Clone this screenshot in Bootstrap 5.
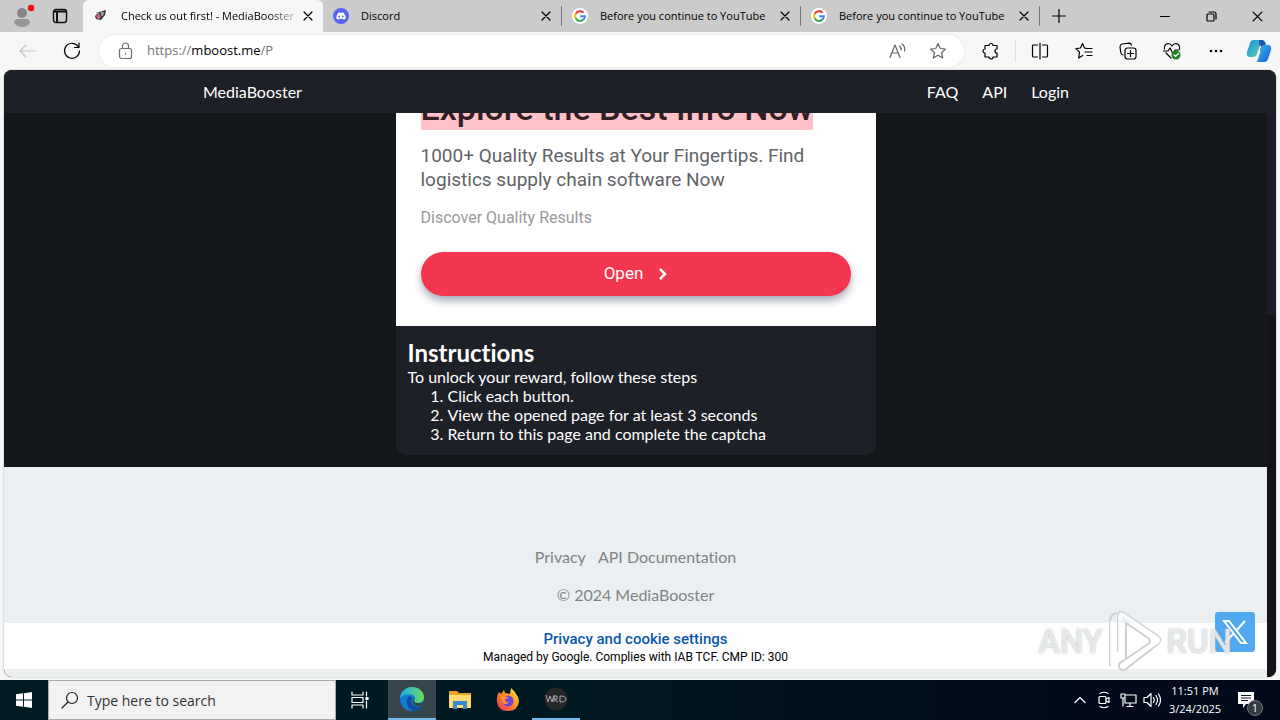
<!DOCTYPE html>
<html lang="en">
<head>
<meta charset="utf-8">
<meta name="viewport" content="width=device-width, initial-scale=1">
<title>Check us out first! - MediaBooster</title>
<link href="https://cdn.jsdelivr.net/npm/bootstrap@5.3.0/dist/css/bootstrap.min.css" rel="stylesheet">
<style>
body{font-family:"Open Sans","Noto Sans",sans-serif;background:#f7f7f7;color:#000}
button,a.plain{border:0;background:none;padding:0;color:inherit;text-decoration:none}
svg{display:block;flex:none}
.line{fill:none;stroke:currentColor;stroke-width:1.2;stroke-linecap:round;stroke-linejoin:round}
.tabstrip{background:#cbcbcb;height:32px}
.tabtools{width:83px}
.browsertab{flex:0 1 239px;min-width:0;font-size:11px;height:32px;padding:0 6px 0 10px;position:relative}
.browsertab.current{background:#f7f7f7;border-radius:6px 6px 0 0;flex-basis:240px;padding-left:10px;padding-right:10px}
.browsertab.sep{border-right:1px solid #777;height:20px}
.tabname{overflow:hidden;white-space:nowrap;flex:1}
.current .tabname{-webkit-mask-image:linear-gradient(90deg,#000 85%,#0003)}
.winbtn{width:46px;height:32px}
.tools{height:38px;padding-left:6px}
.tool{width:44px;height:32px}
.tool.end{width:42px}
.toolrule{margin:8px 2px;color:#999}
.address{background:#fff;border-radius:16px;height:32px;box-shadow:0 0 2px #ddd;margin:0 5px;padding:0 16px}
.urltext{font-size:13px;color:#767676;white-space:nowrap;outline:0}
.urltext b{font-weight:400;color:#000}
.viewport{background:#13171a;border-radius:8px;margin:0 4px 3px;font-family:Lato,sans-serif;font-size:16px;font-variant-ligatures:none;box-shadow:0 0 2px #aaa}
.sitebar{background:#1e2028;color:#fff;height:43px;padding-right:8px}
.sitebar .inner{width:866px;max-width:100%}
.scroller{width:9px;background:#13141a}
.scroller div{height:202px;background:#1e1c28}
.stage{background:#13171a;padding-bottom:12px;min-height:0}
.panel{width:480px;max-width:100%;background:#1e2028;color:#fff;border-radius:0 0 12px 12px}
.promo{background:#fff;padding:0 25px 30px;font-family:Roboto,sans-serif;color:#5f6368}
.promo h2{font-size:34px;line-height:44px;font-weight:500;color:#351d24;white-space:nowrap;margin-bottom:14px}
.promo h2 span{background:#ffc1c9;display:inline-block}
.promo .copy{font-size:19px;line-height:24px;margin-bottom:14px}
.promo .fine{font-size:16px;line-height:24px;color:#999;margin-bottom:22px}
.openbtn{height:44px;border-radius:22px;background:#f4364f;color:#fff;font-size:17px;box-shadow:0 5px 9px #a9adb9}
.steps{padding:13px 12px 12px;line-height:19px}
.steps h1{font-size:24px;line-height:28px;font-weight:700}
.steps ol{padding-left:40px}
.sitefoot{background:#ebeff1;color:#808384;height:156px;padding-top:77px;line-height:26px}
.footlinks{margin-bottom:12px}
.consent{background:#fff;height:46px;font-family:Roboto,sans-serif;font-size:12px;line-height:18px;padding-top:7px}
.consent button{font-size:15px;font-weight:500;color:#0b57b0;line-height:18px}
.footedge{background:#ebefef;height:8px}
.taskbar{background:linear-gradient(90deg,#001a22,#001821 45%,#020a1b 85%);height:40px;color:#fff}
.taskbtn{width:48px;height:40px}
.taskbtn.active{background:#35474d}
.taskbtn.open{border-bottom:2px solid #76b9ed}
.search{width:288px;height:40px;background:#f2f2f2;border:1px solid #aaa}
.search input{border:0;background:none;outline:0;font-size:14px;width:100%;padding:0}
.search input::placeholder{color:#333;opacity:1}
.clock{font-size:11px;line-height:18px;width:62px;white-space:nowrap}
.notify{margin:0 26px 0 12px}
.trayicon{width:24px;height:40px}
.watermark{position:absolute;right:48px;bottom:46px;height:66px;width:194px;pointer-events:none;font:500 33px Roboto,sans-serif;color:#ffffffb0;text-shadow:0 0 2px #a8aeb2}
.xbadge{position:absolute;right:25px;bottom:68px;width:40px;height:40px;background:#50a9f0;border-radius:3px}
.count{position:absolute;right:-9px;bottom:-7px;width:16px;height:16px;border-radius:8px;background:#333a42;border:1px solid #777;font-size:11px;line-height:14px;text-align:center}
</style>
</head>
<body class="vh-100 d-flex flex-column overflow-hidden position-relative">
<svg width="0" height="0" class="position-absolute" aria-hidden="true"><defs>
<symbol id="close" viewBox="0 0 10 10"><path d="M1 1l8 8M9 1L1 9" class="line"/></symbol>
<symbol id="google" viewBox="0 0 16 16"><circle cx="8" cy="8" r="8" fill="#fff"/><g fill="none" stroke-width="2"><path d="M11.6 4.7A4.9 4.9 0 0 0 3.6 5.9" stroke="#ea4335"/><path d="M3.6 5.9a4.9 4.9 0 0 0 0 4.2" stroke="#fbbc05"/><path d="M3.6 10.1a4.9 4.9 0 0 0 7.7 1.5" stroke="#34a853"/><path d="M11.3 11.6A4.7 4.7 0 0 0 12.9 8.2H8.2" stroke="#4285f4"/></g></symbol>
</defs></svg>

<header class="tabstrip d-flex align-items-center flex-shrink-0">
  <div class="tabtools d-flex align-items-center flex-shrink-0">
    <button class="ms-2 ps-1" aria-label="Profile"><svg width="24" height="24" viewBox="0 0 24 24"><circle cx="10" cy="9" r="5" fill="#858585"/><path d="M2 19q0-4 4-4h8q4 0 4 4-3 4-8 4t-8-4z" fill="#969696"/><circle cx="19" cy="4" r="3.2" fill="#e80f14"/></svg></button>
    <button class="ms-3" aria-label="Workspaces"><svg width="16" height="16" viewBox="0 0 16 16"><rect x="1.5" y="1.5" width="13" height="13" rx="2.5" fill="none" stroke="#111" stroke-width="1.4"/><path d="M1.5 3.5h13M5 3v11" stroke="#111" stroke-width="2"/></svg></button>
  </div>
  <div class="browsertab current d-flex align-items-center gap-2">
    <svg width="16" height="16" viewBox="0 0 16 16" class="me-1"><path d="M13 2l-1 5-4 5-5-1-1-3 4-4z" fill="#333"/><path d="M3 8l3-3 2 4-3 3z" fill="#b76b75"/><path d="M8 4l3 1-2 3zM3 5l2-1" stroke="#aaa" fill="#888"/></svg>
    <span class="tabname">Check us out first! - MediaBooster</span>
    <button aria-label="Close tab"><svg width="10" height="10"><use href="#close"/></svg></button>
  </div>
  <div class="browsertab sep d-flex align-items-center gap-2">
    <svg width="16" height="16" viewBox="0 0 16 16"><circle cx="8" cy="8" r="8" fill="#5865f2"/><path d="M5.3 4.8Q8 4 10.7 4.8 12.8 7.7 12.7 10.5q-1 .9-2.3 1l-.7-1.1q-1.7.5-3.4 0l-.7 1.1q-1.3-.1-2.3-1Q3.2 7.7 5.3 4.8z" fill="#fff"/><ellipse cx="6.2" cy="8.4" rx=".9" ry="1" fill="#5865f2"/><ellipse cx="9.8" cy="8.4" rx=".9" ry="1" fill="#5865f2"/></svg>
    <span class="tabname ms-1">Discord</span>
    <button aria-label="Close tab" class="me-1"><svg width="10" height="10"><use href="#close"/></svg></button>
  </div>
  <div class="browsertab sep d-flex align-items-center gap-2">
    <svg width="16" height="16"><use href="#google"/></svg><span class="tabname ms-1">Before you continue to YouTube</span>
    <button aria-label="Close tab" class="me-1"><svg width="10" height="10"><use href="#close"/></svg></button>
  </div>
  <div class="browsertab sep d-flex align-items-center gap-2">
    <svg width="16" height="16"><use href="#google"/></svg><span class="tabname ms-1">Before you continue to YouTube</span>
    <button aria-label="Close tab" class="me-1"><svg width="10" height="10"><use href="#close"/></svg></button>
  </div>
  <button class="ms-2 ps-1" aria-label="New tab"><svg width="14" height="14" class="line"><path d="M7 .5v13M.5 7h13"/></svg></button>
  <div class="d-flex ms-auto">
    <button class="winbtn d-flex align-items-center justify-content-center" aria-label="Minimize"><svg width="10" height="10" class="line"><path d="M0 5.5h10"/></svg></button>
    <button class="winbtn d-flex align-items-center justify-content-center" aria-label="Restore"><svg width="11" height="11" class="line"><rect x="1" y="3" width="7" height="7" rx="1"/><path d="M3 1h5q2 0 2 2v5"/></svg></button>
    <button class="winbtn d-flex align-items-center justify-content-center" aria-label="Close"><svg width="11" height="11" viewBox="0 0 10 10"><use href="#close"/></svg></button>
  </div>
</header>

<div class="tools d-flex align-items-center flex-shrink-0">
  <button class="tool d-flex align-items-center justify-content-center" aria-label="Back" disabled><svg width="18" height="14" class="line" style="color:#c4c4c4"><path d="M16 7H1M7 1L1 7l6 6"/></svg></button>
  <button class="tool d-flex align-items-center justify-content-center" aria-label="Refresh"><svg width="18" height="18" class="line"><path d="M15.5 5A7.5 7.5 0 1 0 16.500 9M16 1v4.500h-4.500"/></svg></button>
  <div class="address d-flex align-items-center flex-fill">
    <svg width="20" height="18" class="line" style="color:#6e6e6e"><rect x="4.500" y="6.500" width="12" height="10" rx="2"/><path d="M7.500 6V4a3 3 0 0 1 6 0v2M10.500 11v1"/></svg>
    <div class="urltext ms-2 ps-1" role="textbox" aria-label="Address" contenteditable="true">https://<b>mboost.me</b>/P</div>
    <button class="ms-auto me-3" aria-label="Read aloud"><svg width="20" height="18" class="line" style="color:#666"><path d="M2 15.500L7 3l5 12.500M4 11h6M11.500 4q2 1.500 1.500 4M14 2q3.500 2.500 2.500 7"/></svg></button>
    <button class="ms-1" aria-label="Add to favorites"><svg width="20" height="20" viewBox="0 0 20 20" class="line" style="color:#666"><path d="M10 2.500l2.200 5 5.300.6-4 3.600 1.200 5.300-4.700-2.800L5.300 17l1.200-5.300-4-3.600 5.300-.6z"/></svg></button>
  </div>
  <button class="tool d-flex align-items-center justify-content-center" aria-label="Extensions"><svg width="18" height="18" class="line"><path d="M5 3.500h2a2 2 0 0 1 4 0h4V7a2 2 0 1 0 0 4v4h-4a2 2 0 0 1-4 0H3v-4a2 2 0 0 1 0-4V3.500z"/></svg></button>
  <div class="vr toolrule"></div>
  <button class="tool d-flex align-items-center justify-content-center" aria-label="Split screen"><svg width="18" height="18" class="line"><path d="M6.500 3h-4Q1.500 3 1.500 4v10q0 1 1 1h4M11.500 3h4q1 0 1 1v10q0 1-1 1h-4M9 1v16"/></svg></button>
  <button class="tool d-flex align-items-center justify-content-center" aria-label="Favorites"><svg width="18" height="18" class="line"><path d="M12 6.500L9.500 6 7.500 1.500l-2 4.500-4.500.7 3.500 3.500L3.700 16l4-2.500M11 6.500h6M10 10h7M12 13.500h5"/></svg></button>
  <button class="tool d-flex align-items-center justify-content-center" aria-label="Collections"><svg width="18" height="18" class="line"><rect x="6" y="6" width="11" height="11" rx="2.500"/><path d="M4 13Q2 12.500 1.700 10L1 5q0-2.500 2-3l7-.8q2 0 2.500 2M11.500 8.500v6M8.500 11.500h6"/></svg></button>
  <button class="tool d-flex align-items-center justify-content-center" aria-label="Browser essentials"><svg width="18" height="18" class="line"><path d="M1.500 7Q1 2 5 1.500 7.500 1.500 9 4q1.500-2.500 4-2.500 4 .5 3.500 5.500M3 11l5 5M0 9h5l2-3 3 6 2-4h4"/><circle cx="13" cy="13" r="4.500" fill="#17851d" stroke="none"/><path d="M11 13l1.500 1.500 3-3" stroke="#fff"/></svg></button>
  <button class="tool d-flex align-items-center justify-content-center" aria-label="Settings and more"><svg width="16" height="4"><circle cx="3" cy="2" r="1.300"/><circle cx="8" cy="2" r="1.300"/><circle cx="13" cy="2" r="1.300"/></svg></button>
  <button class="tool end d-flex align-items-center justify-content-center" aria-label="Copilot"><svg width="26" height="24" viewBox="0 0 26 24"><defs><linearGradient id="ca" y2="1"><stop stop-color="#168be5"/><stop offset="1" stop-color="#5bd99b"/></linearGradient><linearGradient id="cb" y2="1"><stop stop-color="#31c4ec"/><stop offset="1" stop-color="#1d55d6"/></linearGradient></defs><path d="M7 1h9l-5 14q-1 3-4 3H4q-4 0-3-5L4 4q1-3 3-3z" fill="url(#ca)"/><path d="M19 23h-8l5-15q1-2 4-2h2q4 0 3 5l-3 9q-1 3-3 3z" fill="url(#cb)"/><path d="M13 1h3q3 0 4 5-3 0-4 2l-2 5z" fill="#1659ad"/><path d="M11.500 17l4-10-1.500-.2-3 9z" fill="#fff"/></svg></button>
</div>

<div class="viewport flex-fill d-flex flex-column overflow-hidden">
  <nav class="sitebar d-flex justify-content-center flex-shrink-0">
    <div class="inner d-flex align-items-center gap-4"><a class="plain me-auto" href="#">MediaBooster</a><a class="plain" href="#">FAQ</a><a class="plain" href="#">API</a><a class="plain" href="#">Login</a></div>
  </nav>
  <div class="d-flex flex-fill overflow-hidden">
    <div class="flex-fill d-flex flex-column">
      <main class="stage flex-fill d-flex flex-column justify-content-end align-items-center overflow-hidden">
        <section class="panel">
          <div class="promo">
            <h2><span>Explore the Best Info Now</span></h2>
            <p class="copy">1000+ Quality Results at Your Fingertips. Find logistics supply chain software Now</p>
            <p class="fine">Discover Quality Results</p>
            <button class="openbtn w-100 d-flex align-items-center justify-content-center gap-3">Open <svg width="8" height="12"><path d="M1 1l5 5-5 5" fill="none" stroke="#fff" stroke-width="2.500"/></svg></button>
          </div>
          <div class="steps"><h1 class="m-0">Instructions</h1><p class="m-0">To unlock your reward, follow these steps</p>
            <ol class="m-0"><li>Click each button.</li><li>View the opened page for at least 3 seconds</li><li>Return to this page and complete the captcha</li></ol></div>
        </section>
      </main>
      <footer class="sitefoot text-center flex-shrink-0">
        <div class="footlinks d-flex justify-content-center gap-2"><a href="#" class="plain me-1">Privacy</a><a href="#" class="plain">API Documentation</a></div>
        <div>© 2024 MediaBooster</div>
      </footer>
      <div class="consent d-flex flex-column align-items-center flex-shrink-0"><button>Privacy and cookie settings</button><div>Managed by Google. Complies with IAB TCF. CMP ID: 300</div></div>
      <div class="footedge flex-shrink-0"></div>
    </div>
    <div class="scroller flex-shrink-0"><div></div></div>
  </div>
</div>

<footer class="taskbar d-flex align-items-center flex-shrink-0">
  <button class="taskbtn d-flex align-items-center justify-content-center" aria-label="Start"><svg width="16" height="16" fill="#fff"><path d="M0 2.300L7 1.300V7.500H0zM8 1.200L16 0v7.500H8zM0 8.500h7v6.200l-7-1zM8 8.500h8V16l-8-1.200z"/></svg></button>
  <div class="search d-flex align-items-center px-2"><svg width="22" height="20" class="line ms-1 me-1" style="color:#222"><circle cx="11" cy="8" r="5.500"/><path d="M7 12l-6 6"/></svg><input type="text" placeholder="Type here to search" aria-label="Search"></div>
  <button class="taskbtn me-1 d-flex align-items-center justify-content-center" aria-label="Task view"><svg width="18" height="18" class="line"><path d="M1 1v3h11V1M1 17v-3h11v3M1 6.500h11v5H1zM15.500 1v4M15.500 10v7"/><path d="M15 6.500h2v2h-2z" fill="#fff"/></svg></button>
  <button class="taskbtn open active d-flex align-items-center justify-content-center" aria-label="Edge"><svg width="24" height="24" viewBox="0 0 24 24"><defs><linearGradient id="ea"><stop stop-color="#22a7e8"/><stop offset="1" stop-color="#66e05c"/></linearGradient></defs><circle cx="12" cy="12" r="12" fill="#117cd3"/><path d="M0 11C1 4 6 0 12 0c7 0 12 5 12 10 0 4-3 6-6 6-4 0-5-2-3-4 1-5-9-7-15-1z" fill="url(#ea)"/><path d="M9 9c-4 3-3 12 4 15 5 0 8-3 9-5-6 3-13-2-10-8q-1-2-3-2z" fill="#134d9c"/><path d="M14.500 12c-2 3 2 5 7 3.500L24 14l-2 5c-6 2-12-3-8-8z" fill="#35474d"/></svg></button>
  <button class="taskbtn d-flex align-items-center justify-content-center" aria-label="File Explorer"><svg width="22" height="20"><path d="M0 1h8l2 2h12v15H0z" fill="#e9a126"/><path d="M0 5h22v13H0z" fill="#ffdc72"/><path d="M4 19v-8h14v8h-4v-4H8v4z" fill="#368dca"/></svg></button>
  <button class="taskbtn d-flex align-items-center justify-content-center" aria-label="Firefox"><svg width="24" height="24" viewBox="0 0 24 24"><defs><linearGradient id="ff" x1="1" x2="0" y2="1"><stop stop-color="#fff044"/><stop offset=".5" stop-color="#ff8a22"/><stop offset="1" stop-color="#ee2065"/></linearGradient></defs><path d="M3 4l2 2 3-4 1 3 5 1 1-6 4 4 1 2q3 3 3 7-1 10-11 10T1 14Q0 8 3 4z" fill="url(#ff)"/><circle cx="12" cy="13" r="5.500" fill="#7440db"/><path d="M5 9q4-2 8 1l-4 1q0 4 4 3-3 4-6 1z" fill="#ff9822"/></svg></button>
  <button class="taskbtn open d-flex align-items-center justify-content-center" aria-label="WRD"><svg width="24" height="24"><circle cx="12" cy="12" r="11.500" fill="#26272a"/><path d="M2 8l2 7 2-6 2 6 2-7M10 15V9h3v3h-3l4 3M16 9v6q6 0 6-3t-6-3" fill="none" stroke="#aaa"/></svg></button>
  <div class="d-flex align-items-center ms-auto">
    <button class="trayicon d-flex align-items-center justify-content-center" aria-label="Hidden icons"><svg width="12" height="8" class="line"><path d="M1 6.500l5-5 5 5"/></svg></button>
    <button class="trayicon d-flex align-items-center justify-content-center" aria-label="Meet now"><svg width="14" height="18" class="line"><rect x="2" y="5.500" width="7" height="7" rx="1"/><path d="M9 8l3-1.500v5L9 10M3 2.500q4-2.500 8 0M3 15.500q4 2.500 8 0"/></svg></button>
    <button class="trayicon d-flex align-items-center justify-content-center" aria-label="Network"><svg width="17" height="16" class="line"><path d="M6 3h10v8H5V7M10 11v3M7 14.500h6M1 2h4v4H1zM3 6v8"/></svg></button>
    <button class="trayicon d-flex align-items-center justify-content-center" aria-label="Volume"><svg width="18" height="16" class="line"><path d="M1 5.500h3l4-4v13l-4-4H1zM10.500 5.500q1.500 2.500 0 5M13 3.500q3 4.500 0 9M15.500 2q4 6 0 12"/></svg></button>
    <div class="clock text-center">11:51 PM<br>3/24/2025</div>
    <button class="notify position-relative" aria-label="Notifications"><svg width="16" height="18"><path d="M0 1h16v12H8l-3 4v-4H0z" fill="#fff"/><path d="M3 4.500h10M3 7h10M3 9.500h7" stroke="#07101d"/></svg><span class="count">1</span></button>
  </div>
</footer>

<a href="#" class="xbadge d-flex align-items-center justify-content-center" aria-label="X"><svg width="26" height="26" viewBox="0 0 26 26" fill="none" stroke="#fff" stroke-width="2"><path d="M2 2h5l17 22h-5zM23 2l-9 10M11.500 14.500L3 24"/></svg></a>
<div class="watermark d-flex align-items-center justify-content-between"><span>ANY</span><svg width="58" height="64" viewBox="0 0 58 64" fill="none" stroke-linejoin="round"><g stroke="#cdd0d2"><path d="M4 57V11q1-6 7-7M12 43V6q1-5 6-2l34 23q5 4 0 8L20 60q-5 3-7-2-1-4 4-6l25-17q4-3 0-6L20 14v37" stroke-width="2"/></g><path d="M6 56V12M15 58l36-25q3-2 0-4L17 6q-3-2-3 2v35" stroke="#ffffffb0" stroke-width="4"/></svg><span>RUN</span></div>
<script src="https://cdn.jsdelivr.net/npm/bootstrap@5.3.0/dist/js/bootstrap.bundle.min.js"></script>
</body>
</html>
